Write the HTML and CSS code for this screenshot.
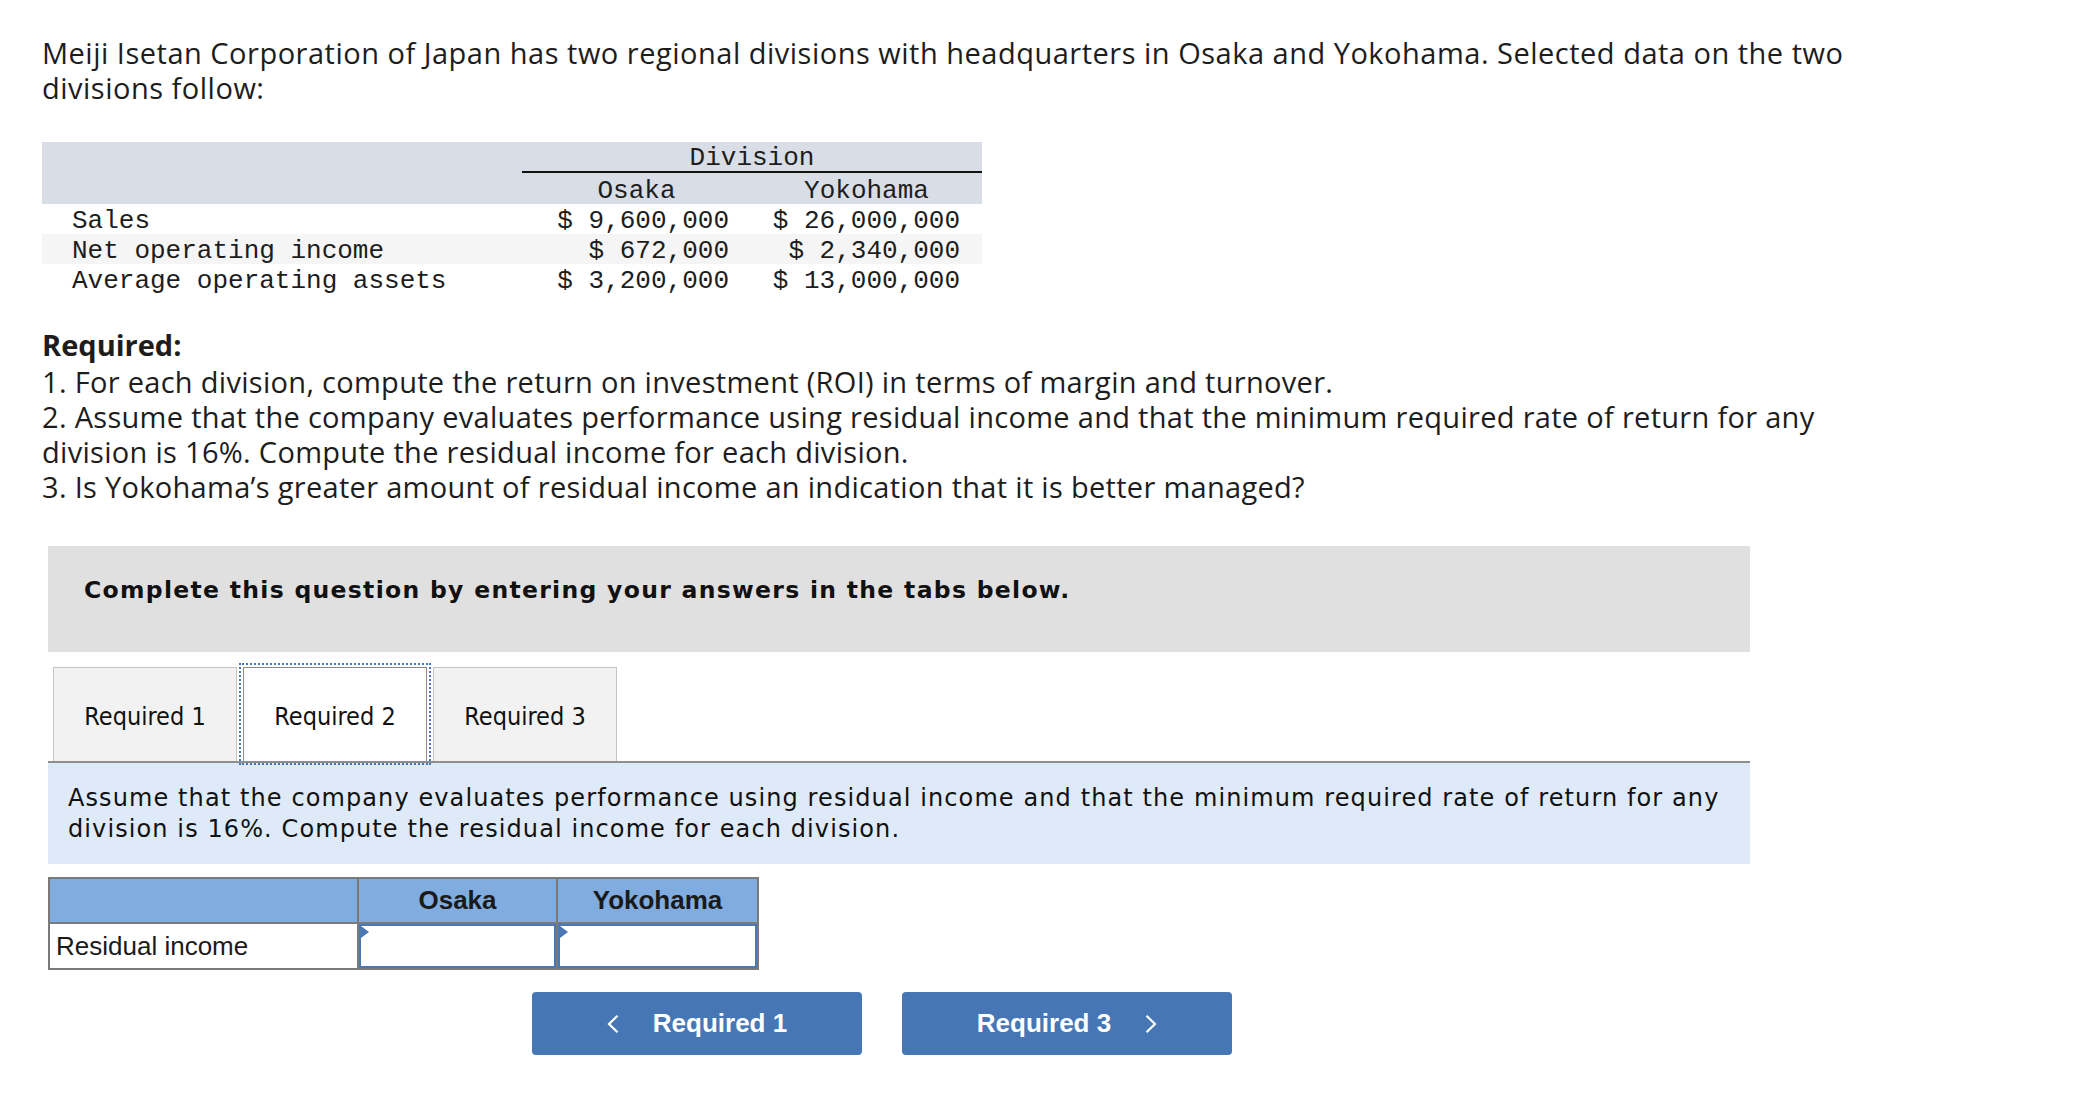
FILE: index.html
```html
<!DOCTYPE html>
<html lang="en">
<head>
<meta charset="utf-8">
<title>Meiji Isetan Corporation</title>
<link rel="stylesheet" href="styles.css">
</head>
<body>
<div class="page">
  <p class="intro">Meiji Isetan Corporation of Japan has two regional divisions with headquarters in Osaka and Yokohama. Selected data on the two divisions follow:</p>

  <table class="data">
    <colgroup><col class="c-lab"><col class="c-val"><col class="c-val2"></colgroup>
    <thead>
      <tr class="h-top"><th></th><th colspan="2" class="division">Division</th></tr>
      <tr class="h-sub"><th></th><th>Osaka</th><th>Yokohama</th></tr>
    </thead>
    <tbody>
      <tr><td class="lab">Sales</td><td class="num">$ 9,600,000</td><td class="num">$ 26,000,000</td></tr>
      <tr class="alt"><td class="lab">Net operating income</td><td class="num">$ 672,000</td><td class="num">$ 2,340,000</td></tr>
      <tr><td class="lab">Average operating assets</td><td class="num">$ 3,200,000</td><td class="num">$ 13,000,000</td></tr>
    </tbody>
  </table>

  <div class="required">
    <div class="req-title">Required:</div>
    <div>1. For each division, compute the return on investment (ROI) in terms of margin and turnover.</div>
    <div>2. Assume that the company evaluates performance using residual income and that the minimum required rate of return for any division is 16%. Compute the residual income for each division.</div>
    <div>3. Is Yokohama’s greater amount of residual income an indication that it is better managed?</div>
  </div>

  <div class="work">
    <div class="instructions">Complete this question by entering your answers in the tabs below.</div>

    <div class="tabs">
      <div class="tab">Required 1</div>
      <div class="tab active">Required 2</div>
      <div class="tab">Required 3</div>
    </div>

    <div class="panel">Assume that the company evaluates performance using residual income and that the minimum required rate of return for any division is 16%. Compute the residual income for each division.</div>

    <table class="answer">
      <colgroup><col class="a-lab"><col class="a-val"><col class="a-val2"></colgroup>
      <thead>
        <tr><th></th><th>Osaka</th><th>Yokohama</th></tr>
      </thead>
      <tbody>
        <tr>
          <td class="a-name">Residual income</td>
          <td class="a-cell"><div class="field"><span class="flag"></span></div></td>
          <td class="a-cell"><div class="field"><span class="flag"></span></div></td>
        </tr>
      </tbody>
    </table>

    <div class="nav">
      <button class="btn" type="button">
        <svg class="chev" width="12" height="18" viewBox="0 0 12 18"><path d="M10.5 0.8 L2 9 L10.5 17.2" fill="none" stroke="#fff" stroke-width="2.2"/></svg>
        <span>Required 1</span>
      </button>
      <button class="btn" type="button">
        <span>Required 3</span>
        <svg class="chev" width="12" height="18" viewBox="0 0 12 18"><path d="M1.5 0.8 L10 9 L1.5 17.2" fill="none" stroke="#fff" stroke-width="2.2"/></svg>
      </button>
    </div>
  </div>
</div>
</body>
</html>
```

FILE: styles.css
```css
html, body {
  margin: 0;
  padding: 0;
  background: #ffffff;
}

.page {
  padding: 36px 0 40px 42px;
  color: #1d1d1d;
  font-family: "Open Sans", Lato, sans-serif;
}

.intro {
  margin: 0;
  width: 1880px;
  font-size: 29px;
  letter-spacing: 0.5px;
  line-height: 34.5px;
}

/* data table */
.data {
  margin-top: 37px;
  width: 940px;
  table-layout: fixed;
  border-collapse: separate;
  border-spacing: 0;
  font-family: "Liberation Mono", "Courier New", monospace;
  font-size: 26px;
  color: #1d1d1d;
}
.c-lab { width: 480px; }
.c-val { width: 229px; }
.c-val2 { width: 231px; }

.data th {
  background: #d9dde6;
  font-weight: normal;
  text-align: center;
  padding: 0;
}
.h-top th {
  padding-top: 4px;
  line-height: 25px;
}
.h-top th.division {
  border-bottom: 2px solid #111;
}
.h-sub th {
  padding-top: 5px;
  line-height: 26px;
}
.data td {
  padding: 5px 0 0 0;
  line-height: 25px;
  white-space: pre;
}
.data td.lab {
  padding-left: 30px;
}
.data td.num {
  text-align: right;
  padding-right: 22px;
}
.data tr.alt td {
  background: #f5f5f5;
}

/* required */
.required {
  margin-top: 33px;
  width: 1880px;
  font-size: 29px;
  letter-spacing: 0.3px;
  line-height: 35px;
}
.req-title {
  font-weight: bold;
  letter-spacing: 0;
  margin-bottom: 2px;
}

/* work area */
.work {
  margin: 42px 0 0 6px;
  width: 1702px;
  font-family: "DejaVu Sans", Verdana, sans-serif;
  color: #111;
}
.instructions {
  background: #e0e0e0;
  padding: 29px 36px 47px 36px;
  font-size: 23.5px;
  letter-spacing: 1.3px;
  line-height: 30px;
  font-weight: bold;
}

.tabs {
  display: flex;
  gap: 6px;
  margin-top: 15px;
  padding-left: 5px;
  border-bottom: 2px solid #8f8f8f;
}
.tab {
  box-sizing: border-box;
  width: 184px;
  height: 94px;
  display: flex;
  align-items: center;
  justify-content: center;
  background: #f2f2f2;
  border: 1px solid #c4c4c4;
  border-bottom: none;
  font-family: "DejaVu Sans Condensed", "DejaVu Sans", sans-serif;
  font-size: 25px;
  padding-top: 3px;
}
.tab.active {
  background: #fff;
  border-color: #8c8c8c;
  outline: 2px dotted #4277bd;
  outline-offset: 2px;
}

.panel {
  background: #deeaf7;
  padding: 20px 0 19px 20px;
  font-size: 24px;
  letter-spacing: 1.1px;
  line-height: 31px;
}

/* answer table */
.answer {
  margin-top: 13px;
  width: 709px;
  table-layout: fixed;
  border-collapse: collapse;
  font-family: "Liberation Sans", Arial, sans-serif;
  font-size: 26px;
  color: #1a1a1a;
}
.a-lab { width: 309px; }
.a-val { width: 199px; }
.a-val2 { width: 201px; }
.answer th, .answer td {
  border: 2px solid #7a7a7a;
  padding: 0;
}
.answer th {
  background: #80acdf;
  height: 43px;
  font-weight: bold;
  text-align: center;
}
.answer td {
  height: 44px;
}
.answer td.a-name {
  padding-left: 6px;
}
.field {
  box-sizing: border-box;
  height: 44px;
  border: 2px solid #4a78b4;
  background: #fff;
  position: relative;
}
.flag {
  position: absolute;
  left: 0;
  top: 0;
  width: 0;
  height: 0;
  border-left: 8px solid #4a78b4;
  border-top: 6px solid transparent;
  border-bottom: 6px solid transparent;
}

/* nav buttons */
.nav {
  display: flex;
  gap: 40px;
  margin-top: 22px;
  padding-left: 484px;
}
.btn {
  box-sizing: border-box;
  width: 330px;
  height: 63px;
  border: none;
  border-radius: 4px;
  background: #4677b4;
  color: #fff;
  display: flex;
  align-items: center;
  justify-content: center;
  gap: 34px;
  font-family: "Liberation Sans", Arial, sans-serif;
  font-size: 26px;
  font-weight: bold;
  padding: 0;
}
.chev {
  display: block;
}
```
